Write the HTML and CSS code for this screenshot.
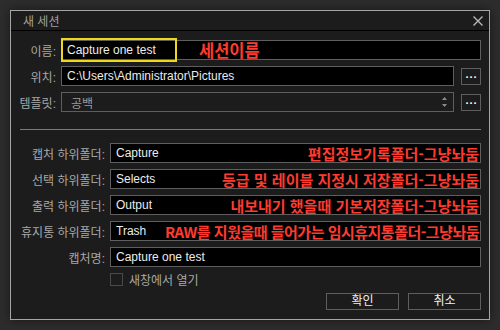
FILE: index.html
```html
<!DOCTYPE html>
<html lang="ko">
<head>
    <meta charset="UTF-8">
    <title>새 세션</title>
    <link rel="stylesheet" href="styles.css">
</head>
<body>
<div class="dialog">
    <div class="titlebar">
        <span class="title">새 세션</span>
        <svg class="close" width="10" height="10" viewBox="0 0 10 10">
            <path d="M0.5 0.5 L9.5 9.5 M9.5 0.5 L0.5 9.5" stroke="#b8b8b8" stroke-width="1.4" fill="none"/>
        </svg>
    </div>
    <div class="content">
        <div class="group top">
            <div class="row">
                <span class="lbl">이름:</span>
                <div class="field">
                    Capture one test
                    <span class="highlight"></span>
                    <span class="note big">세션이름</span>
                </div>
            </div>
            <div class="row">
                <span class="lbl">위치:</span>
                <div class="field">C:\Users\Administrator\Pictures</div>
                <button class="browse">...</button>
            </div>
            <div class="row">
                <span class="lbl">템플릿:</span>
                <div class="field select">
                    <span>공백</span>
                    <svg class="spin" width="5" height="11" viewBox="0 0 5 11">
                        <path d="M0 3 L2.5 0 L5 3 Z M0 7 L2.5 10 L5 7 Z" fill="#8c8c8c"/>
                    </svg>
                </div>
                <button class="browse">...</button>
            </div>
        </div>

        <hr class="sep">

        <div class="group sub">
            <div class="row">
                <span class="lbl">캡처 하위폴더:</span>
                <div class="field">Capture<span class="note">편집정보기록폴더-그냥놔둠</span></div>
            </div>
            <div class="row">
                <span class="lbl">선택 하위폴더:</span>
                <div class="field">Selects<span class="note">등급 및 레이블 지정시 저장폴더-그냥놔둠</span></div>
            </div>
            <div class="row">
                <span class="lbl">출력 하위폴더:</span>
                <div class="field">Output<span class="note">내보내기 했을때 기본저장폴더-그냥놔둠</span></div>
            </div>
            <div class="row">
                <span class="lbl">휴지통 하위폴더:</span>
                <div class="field">Trash<span class="note tight">RAW를 지웠을때 들어가는 임시휴지통폴더-그냥놔둠</span></div>
            </div>
            <div class="row">
                <span class="lbl">캡처명:</span>
                <div class="field">Capture one test</div>
            </div>
            <div class="check">
                <span class="box"></span>
                <span>새창에서 열기</span>
            </div>
        </div>

        <div class="actions">
            <button class="btn">확인</button>
            <button class="btn">취소</button>
        </div>
    </div>
</div>
</body>
</html>
```

FILE: styles.css
```css
body {
    margin: 0;
    padding: 10px;
    background: #2d2d2d;
    font-family: "Liberation Sans", "Noto Sans CJK KR", sans-serif;
    font-size: 12px;
}
.dialog {
    width: 480px;
    height: 310px;
    box-sizing: border-box;
    border: 1px solid #a5a5a5;
    background: #1c1c1c;
    box-shadow: 0 0 10px rgba(0, 0, 0, 0.5);
}
.titlebar {
    height: 20px;
    box-sizing: border-box;
    border-bottom: 1px solid #000;
    display: flex;
    align-items: center;
    justify-content: space-between;
    padding: 0 6px 0 12px;
    color: #a0a0a0;
}
.content {
    padding: 9px 8px 0 0;
}
.group {
    display: flex;
    flex-direction: column;
    gap: 6px;
}
.row {
    display: flex;
    align-items: center;
    height: 20px;
}
.lbl {
    text-align: right;
    color: #a8a8a8;
    margin-right: 5px;
    white-space: nowrap;
}
.top .lbl {
    width: 45px;
}
.sub .lbl {
    width: 94px;
}
.field {
    flex: 1;
    height: 20px;
    box-sizing: border-box;
    border: 1px solid #5e5e5e;
    background: #000;
    color: #ececec;
    padding-left: 5px;
    display: flex;
    align-items: center;
    position: relative;
    white-space: nowrap;
}
.select {
    background: #1c1c1c;
    color: #9c9c9c;
    padding-left: 9px;
    justify-content: space-between;
}
.spin {
    margin-right: 6px;
}
.browse {
    width: 20px;
    height: 17px;
    margin-left: 7px;
    padding: 0 0 4px 1px;
    border: 1px solid #5e5e5e;
    background: #1c1c1c;
    color: #fff;
    font: bold 11px "Liberation Sans", sans-serif;
    letter-spacing: 1px;
    line-height: 10px;
}
.highlight {
    position: absolute;
    left: -1px;
    top: -3px;
    width: 116px;
    height: 24px;
    box-sizing: border-box;
    border: 2px solid #eed81e;
}
.note {
    position: absolute;
    right: 1px;
    top: 0;
    bottom: 0;
    display: flex;
    align-items: center;
    color: #ff3a2e;
    font: bold 15px "Noto Sans CJK KR", sans-serif;
}
.note.tight {
    letter-spacing: -0.5px;
}
.note.big {
    right: auto;
    left: 137px;
    font-size: 16.5px;
}
.sep {
    margin: 17px 0 13px 9px;
    border: 0;
    border-top: 1px solid #7a7a7a;
    height: 0;
}
.check {
    display: flex;
    align-items: center;
    height: 13px;
    padding-left: 99px;
    color: #a8a8a8;
}
.box {
    width: 13px;
    height: 13px;
    box-sizing: border-box;
    border: 1px solid #4a4a4a;
    margin-right: 6px;
}
.actions {
    display: flex;
    justify-content: flex-end;
    gap: 9px;
    margin-top: 7px;
}
.btn {
    width: 73px;
    height: 17px;
    padding: 0;
    border: 1px solid #5e5e5e;
    background: #1c1c1c;
    color: #f0f0f0;
    font: 12px "Liberation Sans", "Noto Sans CJK KR", sans-serif;
    line-height: 15px;
}
```
